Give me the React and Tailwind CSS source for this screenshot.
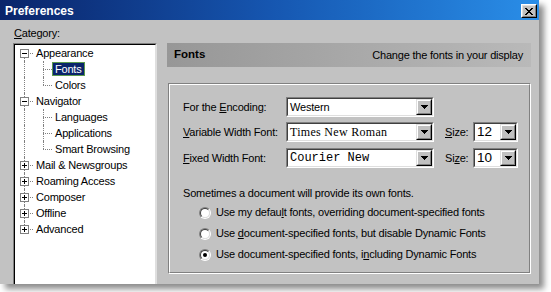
import React from 'react';

const ui = "font-['Liberation_Sans',Arial,sans-serif]";

const tree = [
  { label: 'Appearance', open: true, children: ['Fonts', 'Colors'] },
  { label: 'Navigator', open: true, children: ['Languages', 'Applications', 'Smart Browsing'] },
  { label: 'Mail & Newsgroups', children: [] },
  { label: 'Roaming Access', children: [] },
  { label: 'Composer', children: [] },
  { label: 'Offline', children: [] },
  { label: 'Advanced', children: [] },
];

// flatten the tree into rows the list can draw
function buildRows() {
  const rows = [];
  tree.forEach((node, i) => {
    const lastTop = i === tree.length - 1;
    rows.push({ label: node.label, level: 0, first: i === 0, last: lastTop, expander: node.open ? 'minus' : 'plus' });
    if (node.open) {
      node.children.forEach((c, j) => {
        rows.push({ label: c, level: 1, first: j === 0, last: j === node.children.length - 1, parentLast: lastTop, selected: c === 'Fonts' });
      });
    }
  });
  return rows;
}

function Expander({ type }) {
  return (
    <svg width="9" height="9" viewBox="0 0 9 9" shapeRendering="crispEdges" className="absolute left-[4px] top-[4px]">
      <rect x="0.5" y="0.5" width="8" height="8" fill="#fff" stroke="#808080" />
      <line x1="2" y1="4.5" x2="7" y2="4.5" stroke="#000" />
      {type === 'plus' && <line x1="4.5" y1="2" x2="4.5" y2="7" stroke="#000" />}
    </svg>
  );
}

function TreeRow({ row }) {
  return (
    <div className="flex h-[16px] items-center">
      {row.level === 1 && (
        <div className="relative h-full w-[19px] shrink-0">
          {!row.parentLast && <span className="absolute left-[8px] top-0 bottom-0 border-l border-dotted border-[#808080]" />}
        </div>
      )}
      <div className="relative h-full w-[17px] shrink-0">
        {!(row.level === 0 && row.first) && <span className="absolute left-[8px] top-0 h-[8px] border-l border-dotted border-[#808080]" />}
        {!row.last && <span className="absolute left-[8px] top-[8px] bottom-0 border-l border-dotted border-[#808080]" />}
        <span className="absolute left-[8px] right-0 top-[8px] border-t border-dotted border-[#808080]" />
        {row.expander && <Expander type={row.expander} />}
      </div>
      <span
        className={
          row.selected
            ? 'h-[14px] border border-[#5c9a4c] bg-[#0a246a] px-[2px] leading-[12px] text-white whitespace-nowrap'
            : 'h-[14px] border border-transparent px-[2px] leading-[12px] text-black whitespace-nowrap'
        }
      >
        {row.label}
      </span>
    </div>
  );
}

function ArrowButton() {
  return (
    <div className="h-[16px] w-[16px] shrink-0 border border-t-[#dfdfdf] border-l-[#dfdfdf] border-b-black border-r-black bg-[#c0c0c0]">
      <div className="flex h-full w-full items-center justify-center border border-t-white border-l-white border-b-[#808080] border-r-[#808080]">
        <svg width="7" height="4" viewBox="0 0 7 4" shapeRendering="crispEdges">
          <path d="M0 0H7L3.5 4Z" fill="#000" />
        </svg>
      </div>
    </div>
  );
}

function Combo({ className, textClass, children }) {
  return (
    <div className={`h-[20px] shrink-0 border border-t-[#808080] border-l-[#808080] border-b-white border-r-white ${className}`}>
      <div className="flex h-full items-center border border-t-[#404040] border-l-[#404040] border-b-[#dfdfdf] border-r-[#dfdfdf] bg-white">
        <span className={`flex-1 overflow-hidden whitespace-nowrap pl-[2px] ${textClass}`}>{children}</span>
        <ArrowButton />
      </div>
    </div>
  );
}

function Radio({ checked }) {
  return (
    <div className="h-[12px] w-[12px] shrink-0 rounded-full border border-t-[#808080] border-l-[#808080] border-b-white border-r-white">
      <div className="flex h-full w-full items-center justify-center rounded-full border border-t-[#404040] border-l-[#404040] border-b-[#dfdfdf] border-r-[#dfdfdf] bg-white">
        {checked && <div className="h-[4px] w-[4px] rounded-full bg-black" />}
      </div>
    </div>
  );
}

export default function App() {
  const rows = buildRows();

  return (
    <div className={`h-[292px] w-[551px] overflow-hidden bg-white ${ui} text-[11px] tracking-[-0.2px] text-black`}>
      <div className="flex h-[284px] w-[539px] flex-col overflow-hidden bg-[#c2c2c2] shadow-[5px_5px_6px_rgba(0,0,0,0.45)]">
        {/* title bar */}
        <div className="flex h-[20px] shrink-0 items-start justify-between bg-gradient-to-r from-[#0a246a] via-[#1656b0] to-[#2a8ee8]">
          <span className="pl-[5px] pt-[4px] text-[12px] font-bold leading-[14px] tracking-normal text-white">Preferences</span>
          <div className="mr-[2px] mt-[4px] h-[14px] w-[16px] border border-t-white border-l-white border-b-black border-r-black bg-[#c0c0c0]">
            <div className="flex h-full w-full items-center justify-center border border-t-[#dfdfdf] border-l-[#dfdfdf] border-b-[#808080] border-r-[#808080]">
              <svg width="8" height="7" viewBox="0 0 8 7" shapeRendering="crispEdges">
                <path d="M0 0h2v1h1v1h2V1h1V0h2v1H7v1H6v1H5v1h1v1h1v1h1v1H6V6H5V5H3v1H2v1H0V6h1V5h1V4h1V3H2V2H1V1H0Z" fill="#000" />
              </svg>
            </div>
          </div>
        </div>

        {/* body */}
        <div className="flex flex-1">
          {/* category tree */}
          <div className="w-[157px] shrink-0 pl-[13px]">
            <div className="pl-[1px] pt-[7px] leading-[13px]">
              <span className="underline">C</span>ategory:
            </div>
            <div className="mt-[3px] h-[244px] w-[144px] border border-t-[#808080] border-l-[#808080] border-b-white border-r-[#dfdfdf]">
              <div className="h-full border border-t-black border-l-black border-b-[#dfdfdf] border-r-[#dfdfdf] bg-white pl-[1px]">
                {rows.map((r) => (
                  <TreeRow key={r.label} row={r} />
                ))}
              </div>
            </div>
          </div>

          {/* fonts panel */}
          <div className="ml-[10px] w-[364px] shrink-0">
            <div className="mt-[23px] flex h-[24px] items-center justify-between bg-gradient-to-r from-[#979797] via-[#a8a8a8] to-[#b9b9b9] pl-[7px] pr-[8px]">
              <span className="text-[11.5px] font-bold tracking-normal">Fonts</span>
              <span>Change the fonts in your display</span>
            </div>

            <div className="ml-[1px] mt-[16px] h-[191px] w-[363px] border border-t-[#808080] border-l-[#808080] border-b-white border-r-white">
              <div className="h-full border border-t-white border-l-white border-b-[#808080] border-r-[#808080] pl-[13px] pt-[12px]">
                <div className="flex h-[20px] items-center">
                  <span className="w-[103px] shrink-0">
                    For the <span className="underline">E</span>ncoding:
                  </span>
                  <Combo className="w-[148px]" textClass="">Western</Combo>
                </div>

                <div className="mt-[5px] flex h-[20px] items-center">
                  <span className="w-[103px] shrink-0">
                    <span className="underline">V</span>ariable Width Font:
                  </span>
                  <Combo className="w-[148px]" textClass="font-['Liberation_Serif','Times_New_Roman',serif] text-[12px] tracking-[0.3px]">
                    Times New Roman
                  </Combo>
                  <span className="ml-[11px] w-[28px] shrink-0">
                    <span className="underline">S</span>ize:
                  </span>
                  <Combo className="w-[45px]" textClass="text-[13.5px] leading-[16px] tracking-normal">12</Combo>
                </div>

                <div className="mt-[6px] flex h-[20px] items-center">
                  <span className="w-[103px] shrink-0">
                    <span className="underline">F</span>ixed Width Font:
                  </span>
                  <Combo className="w-[148px]" textClass="font-['Liberation_Mono','Courier_New',monospace] text-[12px] tracking-normal">
                    Courier New
                  </Combo>
                  <span className="ml-[11px] w-[28px] shrink-0">
                    Si<span className="underline">z</span>e:
                  </span>
                  <Combo className="w-[45px]" textClass="text-[13.5px] leading-[16px] tracking-normal">10</Combo>
                </div>

                <div className="mt-[19px] leading-[13px]">Sometimes a document will provide its own fonts.</div>

                <div className="mt-[2px] pl-[16px]">
                  <div className="flex h-[21px] items-center">
                    <Radio />
                    <span className="ml-[5px]">
                      Use my defau<span className="underline">l</span>t fonts, overriding document-specified fonts
                    </span>
                  </div>
                  <div className="flex h-[21px] items-center">
                    <Radio />
                    <span className="ml-[5px]">
                      Use <span className="underline">d</span>ocument-specified fonts, but disable Dynamic Fonts
                    </span>
                  </div>
                  <div className="flex h-[21px] items-center">
                    <Radio checked />
                    <span className="ml-[5px]">
                      Use document-specified fonts, i<span className="underline">n</span>cluding Dynamic Fonts
                    </span>
                  </div>
                </div>
              </div>
            </div>
          </div>
        </div>
      </div>
    </div>
  );
}
